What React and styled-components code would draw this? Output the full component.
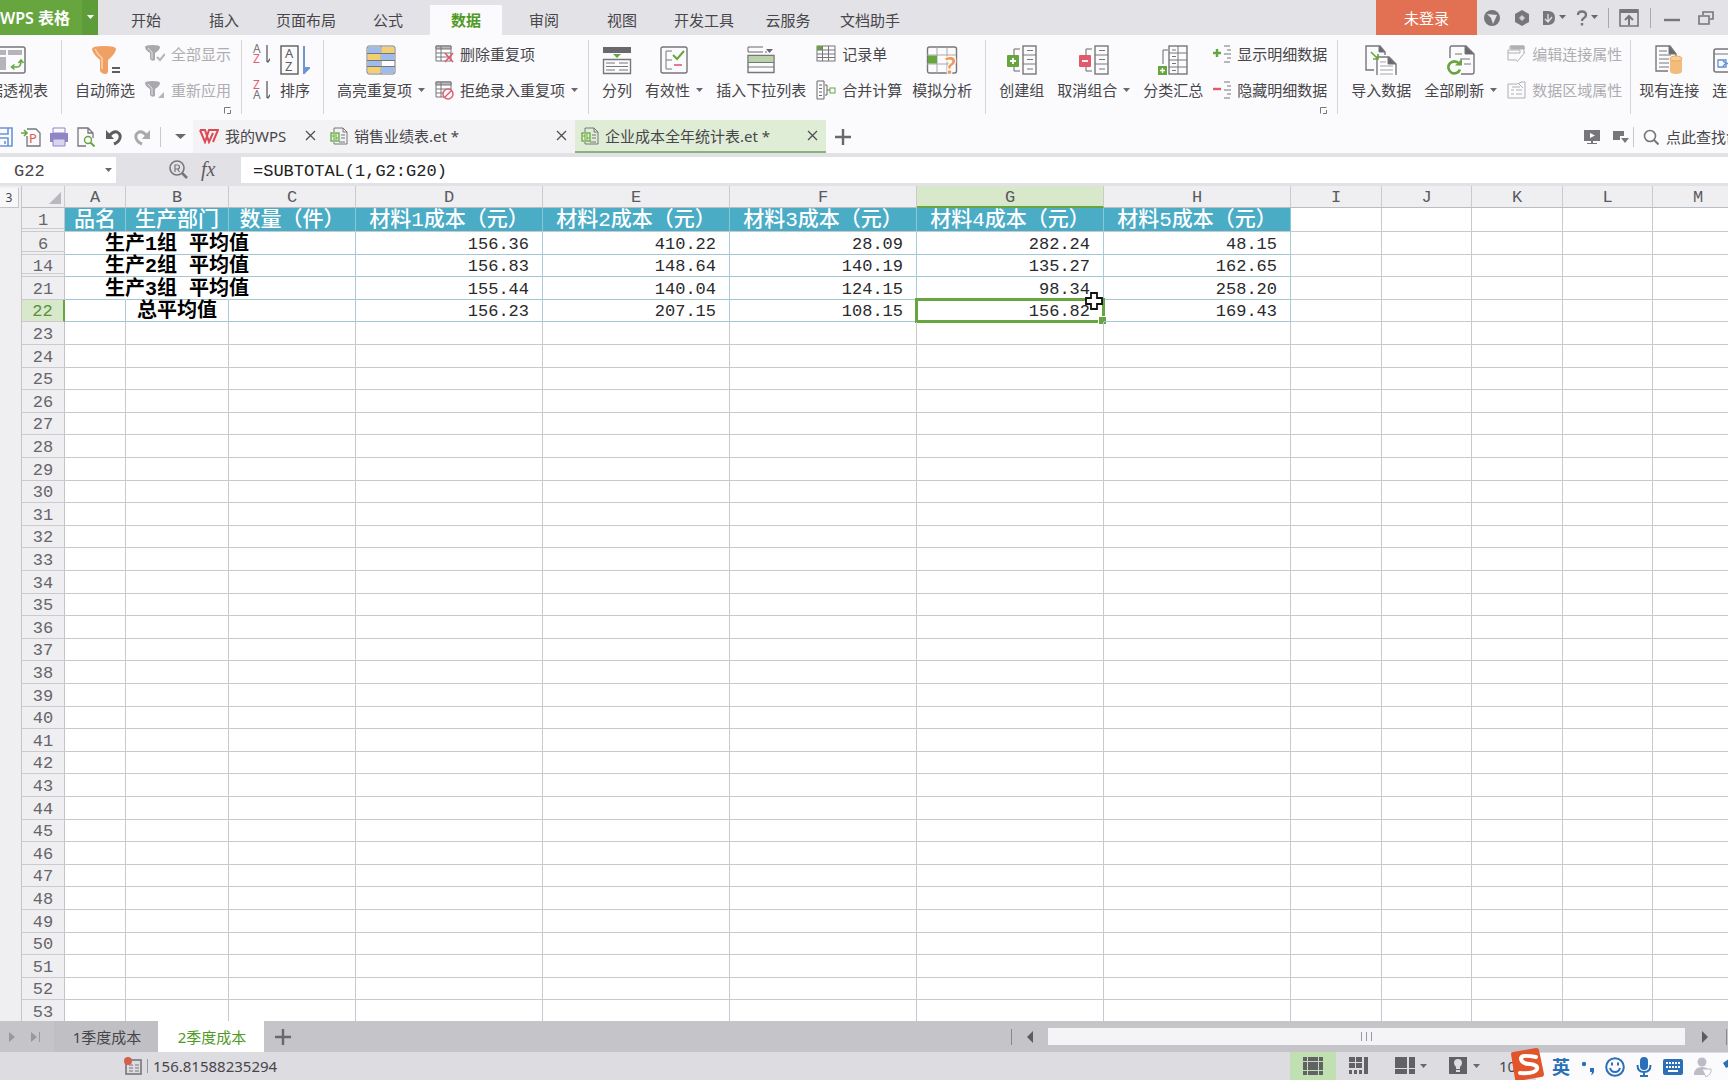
import React, { useState } from "react";
import styled, { createGlobalStyle, css } from "styled-components";

const GREEN = "#67a63f";
const GREY = "#77767a";
const UI_FONT = `"Noto Sans", "Noto Sans CJK SC", sans-serif`;
const CELL_FONT = `"Liberation Mono", "Noto Sans CJK SC", monospace`;

const GlobalStyle = createGlobalStyle`
  * { box-sizing: border-box; }
  body {
    margin: 0;
    overflow: hidden;
    background: #fbfafc;
    color: #47464a;
    font: 15px/20px ${UI_FONT};
  }
  button, input {
    margin: 0;
    padding: 0;
    border: 0;
    background: none;
    color: inherit;
    font: inherit;
  }
  button { white-space: nowrap; }
  input:focus { outline: none; }
  svg { display: block; flex: none; }
  svg text { font-family: ${UI_FONT}; }
`;

const Window = styled.div`
  display: flex;
  flex-direction: column;
  height: 100vh;
  overflow: hidden;
`;

/* ---------- title bar ---------- */

const TitleBar = styled.header`
  display: flex;
  flex: none;
  height: 35px;
  background: #e3e2e7;
`;

const AppButton = styled.button`
  display: flex;
  align-items: center;
  justify-content: flex-end;
  width: 98px;
  background: ${GREEN};
  color: #fff;
  font-size: 16px;
  font-weight: 600;
`;

const AppCaret = styled.span`
  display: flex;
  align-items: center;
  justify-content: center;
  align-self: stretch;
  width: 17px;
  margin-left: 12px;
  background: #5d9c38;
`;

const Menu = styled.nav`
  display: flex;
  align-items: flex-end;
  gap: 6px;
  padding-left: 12px;
`;

const MenuTab = styled.button`
  width: ${p => p.$width || 72}px;
  height: 30px;
  background: ${p => (p.$active ? "#fbfafc" : "transparent")};
  color: ${p => (p.$active ? "#4f9a26" : "#47464a")};
  font-weight: ${p => (p.$active ? 600 : 400)};
`;

const TitleTools = styled.div`
  display: flex;
  align-items: center;
  margin-left: auto;
  padding-right: 3px;
`;

const LoginButton = styled.button`
  width: 101px;
  height: 35px;
  background: #e27052;
  color: #fff;
`;

const TitleTool = styled.button`
  display: flex;
  align-items: center;
  justify-content: center;
  gap: 3px;
  width: ${p => p.$width || 30}px;
  height: 30px;
`;

const Divider = styled.span`
  flex: none;
  width: 1px;
  height: ${p => p.$height || 20}px;
  margin: 0 ${p => p.$gap || 0}px;
  background: ${p => p.$color || "#c9c8cc"};
`;

/* ---------- ribbon ---------- */

const Ribbon = styled.section`
  display: flex;
  flex: none;
  height: 85px;
  margin-left: -27px;
  padding-top: 5px;
  overflow: hidden;
`;

const Group = styled.div`
  position: relative;
  display: flex;
  flex: none;
  gap: 10px;
  height: 74px;
  padding-left: ${p => p.$left ?? 13}px;
  padding-right: ${p => p.$right ?? 13}px;
  border-right: 1px solid #d6d5d9;
`;

const BigButton = styled.button`
  display: flex;
  flex-direction: column;
  align-items: center;
  gap: 5px;
  height: 65px;
  padding-top: 5px;

  & + & {
    margin-left: 3px;
  }
`;

const Label = styled.span`
  display: flex;
  align-items: center;
  gap: 6px;
`;

const Stack = styled.div`
  display: flex;
  flex-direction: column;
  gap: 16px;
  padding-top: 4px;
`;

const SmallButton = styled.button`
  display: flex;
  align-items: center;
  gap: 6px;
  height: 20px;
  color: ${p => (p.disabled ? "#aeadb1" : "inherit")};
`;

const Launcher = styled.button`
  position: absolute;
  right: 10px;
  bottom: 0;
`;

/* ---------- quick access + document tabs ---------- */

const QuickBar = styled.div`
  display: flex;
  flex: none;
  align-items: center;
  height: 33px;
`;

const QuickTools = styled.div`
  display: flex;
  align-items: center;
  justify-content: space-between;
  width: 160px;
  margin-left: -7px;
  padding-right: 1px;
`;

const IconButton = styled.button`
  display: flex;
  align-items: center;
  justify-content: center;
  width: ${p => p.$width || 20}px;
  height: ${p => p.$height || 24}px;
`;

const DocTab = styled.div`
  display: flex;
  align-items: center;
  gap: 6px;
  width: ${p => p.$width}px;
  height: 33px;
  padding: 0 8px 0 6px;
  background: ${p => (p.$active ? "#e0edd6" : "#f3f2f5")};
  border-bottom: 2px solid ${p => (p.$active ? "#8bb27a" : "#f3f2f5")};
`;

const DocName = styled.button`
  flex: 1;
  text-align: left;
`;

const QuickRight = styled.div`
  display: flex;
  align-items: center;
  width: 144px;
  margin-left: auto;
  overflow: hidden;
  white-space: nowrap;
`;

const FindCommand = styled.button`
  display: flex;
  align-items: center;
  gap: 7px;
`;

/* ---------- formula bar ---------- */

const FormulaBar = styled.div`
  display: flex;
  flex: none;
  height: 33px;
  padding: 4px 0 3px;
  background: #e2e1e6;
  font-family: ${CELL_FONT};
  font-size: 17px;
`;

const NameBox = styled.div`
  display: flex;
  align-items: center;
  width: 116px;
  padding: 0 4px 0 14px;
  background: #fff;

  input {
    flex: 1;
    min-width: 0;
    padding-top: 3px;
  }
`;

const FormulaTools = styled.div`
  display: flex;
  align-items: center;
  justify-content: flex-end;
  gap: 12px;
  width: 125px;
  padding-right: 21px;
`;

const FormulaInput = styled.input`
  flex: 1;
  min-width: 0;
  padding-top: 3px;
  padding-left: 12px;
  background: #fff;
  color: #222;
`;

/* ---------- sheet ---------- */

const SheetArea = styled.main`
  display: flex;
  flex: 1;
  min-height: 0;
  overflow: hidden;
  background: #fff;
`;

const Outline = styled.aside`
  flex: none;
  width: 22px;
  background: #efeef1;
  border-right: 1px solid #c5c4c9;
`;

const OutlineLevel = styled.button`
  width: 19px;
  height: 20px;
  border: 1px solid #c5c4c9;
  border-width: 0 1px 1px 0;
  background: #f7f6f8;
  font-size: 12px;
`;

const Sheet = styled.table`
  flex: none;
  width: 1721px;
  table-layout: fixed;
  border-collapse: separate;
  border-spacing: 0;
  font-family: ${CELL_FONT};
  font-size: 17px;
  line-height: 18px;
  white-space: nowrap;

  th, td {
    padding: 3px 0 0;
    font-weight: 400;
  }
`;

const ColHead = styled.th`
  height: 22px;
  background: ${p => (p.$active ? "#d7e8cb" : "#efeef1")};
  border-right: 1px solid #cbcacf;
  border-bottom: ${p => (p.$active ? `2px solid ${GREEN}` : "1px solid #b9bcc2")};
  color: #5a595d;
  line-height: 16px;
`;

const Corner = styled(ColHead)`
  svg {
    margin: 0 3px 0 auto;
  }
`;

const SheetRow = styled.tr`
  height: 23px;

  &:nth-child(5n),
  &:nth-child(5n + 3) {
    height: 22px;
  }

  &:first-child {
    height: 24px;
  }
`;

const RowHead = styled.th`
  background: ${p => (p.$active ? "#d7e8cb" : "#efeef1")};
  color: ${p => (p.$active ? "#5a8f3c" : "#66656a")};
  border-right: ${p => (p.$active ? `2px solid ${GREEN}` : "1px solid #c5c4c9")};
  border-bottom: 1px solid #cbcacf;
  box-shadow: ${p => (p.$folded ? "inset 0 -2px #efeef1, inset 0 -3px #cbcacf" : "none")};
`;

const Cell = styled.td`
  position: relative;
  border-right: 1px solid ${p => (p.$open ? "#fff" : p.$data ? "#a9cbd6" : "#c9c8cd")};
  border-bottom: 1px solid ${p => (p.$data ? "#a3c6d2" : "#c9c8cd")};
  color: #2a2a2d;

  ${p =>
    p.$head &&
    css`
      background: #4bacc6;
      border-right-color: #86c8da;
      color: #fff;
      font-size: 21px;
      font-weight: 500 !important;
      text-align: center;
    `}
  ${p => p.$number && "padding-right: 13px !important; text-align: right;"}
`;

const Title = styled.span`
  display: flex;
  justify-content: center;
  height: 18px;
  color: #000;
  font-size: 20px;
  font-weight: 700;
`;

const Selection = styled.span`
  position: absolute;
  inset: -2px -2px -2px -2px;
  border: 3px solid ${GREEN};

  &::after {
    content: "";
    position: absolute;
    right: -4px;
    bottom: -4px;
    width: 7px;
    height: 7px;
    border: 1px solid #fff;
    border-width: 1px 0 0 1px;
    background: ${GREEN};
  }
`;

const Pointer = styled.svg`
  position: absolute;
  z-index: 2;
  right: -1px;
  top: -9px;
`;

/* ---------- bottom bars ---------- */

const SheetBar = styled.footer`
  display: flex;
  flex: none;
  height: 31px;
  background: #c5c4c8;
`;

const SheetTabs = styled.div`
  display: flex;
  align-items: center;
  width: 1011px;
`;

const SheetNav = styled.div`
  display: flex;
  align-items: center;
  gap: 14px;
  width: 54px;
  padding-left: 8px;
`;

const SheetTab = styled.button`
  width: ${p => (p.$active ? 106 : 104)}px;
  height: 31px;
  padding-left: 2px;
  background: ${p => (p.$active ? "#fff" : "#c0bfc4")};
  color: ${p => (p.$active ? "#4f9a26" : "#47464a")};
`;

const ScrollRow = styled.div`
  display: flex;
  flex: 1;
  align-items: center;
`;

const Thumb = styled.div`
  display: flex;
  flex: 1;
  align-items: center;
  justify-content: center;
  gap: 4px;
  height: 17px;
  background: #f4f3f6;
`;

const StatusBar = styled.footer`
  display: flex;
  flex: none;
  align-items: center;
  height: 28px;
  padding-left: 124px;
  background: #dddce1;
`;

const StatusViews = styled.div`
  display: flex;
  align-items: center;
  width: 438px;
  height: 28px;
  margin-left: auto;
`;

const ViewButton = styled.button`
  display: flex;
  align-items: center;
  justify-content: center;
  gap: 5px;
  width: ${p => p.$width || 46}px;
  height: 28px;
  background: ${p => (p.$active ? "#c1e0b1" : "transparent")};
`;

const InputBar = styled.div`
  position: fixed;
  right: 0;
  bottom: 0;
  display: flex;
  align-items: center;
  gap: 11px;
  width: 192px;
  height: 27px;
  padding-left: 16px;
  overflow: hidden;
  background: #fbfbfd;
  color: #2a6fb8;
  font-size: 18px;
  font-weight: 700;
`;

const InputLogo = styled.svg`
  position: fixed;
  right: 183px;
  bottom: 0;
`;

/* ---------- icons ---------- */

const Icon = ({ w = 20, h = 20, children, ...rest }) => (
  <svg
    width={w}
    height={h}
    viewBox={`0 0 ${w} ${h}`}
    fill="none"
    stroke={GREY}
    aria-hidden="true"
    {...rest}
  >
    {children}
  </svg>
);

const Caret = ({ color = "#69686c", w = 7 }) => (
  <Icon w={w} h={5} fill={color} stroke="none">
    <path d={`M0 0H${w}L${w / 2} ${w > 8 ? 5 : 4}z`} />
  </Icon>
);

const Close = () => (
  <Icon w={11} h={11} stroke="#4f4e52" strokeWidth="1.3">
    <path d="M1 1l9 9M10 1l-9 9" />
  </Icon>
);

const Plus = () => (
  <Icon w={16} h={16} strokeWidth="2.4" stroke="#69686c">
    <path d="M8 0v16M0 8h16" />
  </Icon>
);

const PivotIcon = () => (
  <Icon w={30} h={30}>
    <rect x="1" y="2" width="28" height="26" rx="2" strokeWidth="1.5" />
    <path d="M4 5h6v5H4zM12 5h14v5H12zM4 12h6v13H4z" fill="#b5b4b8" stroke="none" />
    <path d="M16 22h5q4 0 4-6M22.5 18l2.5-3 2.5 3M18.5 19.5L15.5 22l3 2.5" stroke={GREEN} strokeWidth="1.5" />
  </Icon>
);

const FilterIcon = () => (
  <Icon w={30} h={30} stroke="none">
    <path d="M2 4q0-3 12-3t12 3q0 4-8 11v11q0 3-3 3-5-1-5-4V15Q2 8 2 4z" fill="#f0a063" />
    <path d="M5 4q3 6 7 9v11" stroke="#fbd3b0" strokeWidth="1.5" />
    <path d="M22 22h8v2h-8zM22 26h8v2h-8z" fill="#5d5c60" />
  </Icon>
);

const SmallFilter = ({ again }) => (
  <Icon stroke="none">
    <path d="M0 3q0-2 7.5-2T15 3q0 3-5 6v7q-3 2-5-1V9Q0 6 0 3z" fill="#a9a8ac" />
    <path d="M3 4q2 3 4 4v7" stroke="#e4e3e6" />
    {again ? (
      <path d="M19 12v6h-6z" fill="#b5b4b8" />
    ) : (
      <path d="M12 13l3 3 5-6" stroke="#b5b4b8" strokeWidth="2" />
    )}
  </Icon>
);

const AzIcon = ({ reverse }) => (
  <Icon w={18} stroke="none">
    <text x="1" y="9" fontSize="12" fill={reverse ? "#df5d70" : "#77767a"}>{reverse ? "Z" : "A"}</text>
    <text x="1" y="19" fontSize="12" fill={reverse ? "#77767a" : "#df5d70"}>{reverse ? "A" : "Z"}</text>
    <path d="M15 1v17M15.5 18.5l3-4" stroke="#5d5c60" strokeWidth="1.3" />
  </Icon>
);

const SortIcon = () => (
  <Icon w={30} h={30}>
    <rect x="1" y="1" width="17" height="28" stroke="#5d5c60" strokeWidth="1.4" />
    <text x="5" y="13" fontSize="13" fill="#5d5c60" stroke="none">A</text>
    <text x="5" y="26" fontSize="13" fill="#5d5c60" stroke="none">Z</text>
    <path d="M24 1v28M24 28l5-5h-5" stroke="#6d95d6" strokeWidth="2" fill="#6d95d6" />
  </Icon>
);

const HighlightIcon = () => (
  <Icon w={30} h={30}>
    <rect x="1" y="1" width="28" height="28" rx="2" fill="#fff" />
    <path d="M2 2h12v6H2zM16 9h12v6H16zM2 16h12v5H2zM16 22h12v6H16z" fill="#9dbbec" stroke="none" />
    <path d="M16 2h12v6H16zM2 9h12v6H2zM2 22h12v6H2z" fill="#f4cf72" stroke="none" />
    <path d="M1 8.5h28M1 15.5h28M1 21.5h28M15 1v28" />
  </Icon>
);

const DupIcon = ({ ban }) => (
  <Icon w={19}>
    <path d="M1 2h15v15H1z" fill="#fff" />
    <path d="M1 2h15v3H1z" fill="#b8b7bb" />
    <path d="M1 9h15M1 13h15M6 2v15" />
    {ban ? (
      <g stroke="#df5d70" strokeWidth="1.5">
        <circle cx="13" cy="14" r="5" fill="#fbfafc" />
        <path d="M9.5 17.5l7-7" />
      </g>
    ) : (
      <path d="M10 9l8 9M18 9l-8 9" stroke="#df5d70" strokeWidth="1.8" />
    )}
  </Icon>
);

const SplitIcon = () => (
  <Icon w={30} h={30}>
    <path d="M1 2h28v6H1z" fill="#69686c" stroke="none" />
    <path d="M11 9h8l-4 4z" fill={GREEN} stroke="none" />
    <path d="M1.5 14.5h27v14h-27z" strokeWidth="1.4" />
    <path d="M4 18h9M17 18h9M4 21.5h22M4 25h9M17 25h9" />
  </Icon>
);

const ValidIcon = () => (
  <Icon w={30} h={30}>
    <rect x="2" y="2" width="26" height="26" rx="2" strokeWidth="1.4" />
    <path d="M13 6H7v18h6M7 15h6" />
    <path d="M14 10l4 4 7-8" stroke={GREEN} strokeWidth="2" />
    <path d="M15 20h8" stroke="#df5d70" strokeWidth="1.6" />
  </Icon>
);

const DropListIcon = () => (
  <Icon w={30} h={30}>
    <path d="M2 7V2h15M2 7h15M19 7h2" stroke="#69686c" />
    <path d="M20 4h7l-3.5 4z" fill="#69686c" stroke="none" />
    <path d="M2 10.5h26v17H2z" strokeWidth="1.4" />
    <path d="M3 11h24v6H3z" fill="#b9d3a8" stroke="none" />
    <path d="M2 17.5h26M2 22h26" />
  </Icon>
);

const FormIcon = () => (
  <Icon>
    <rect x="1" y="2" width="18" height="15" />
    <path d="M1 2h5v4H1z" fill={GREEN} stroke="none" />
    <path d="M1 6h18M1 10h18M1 13.5h18M6.5 2v15M12.5 2v15" />
  </Icon>
);

const MergeIcon = () => (
  <Icon>
    <path d="M1 1h7v18H1zM3 5h3M3 8.5h3M3 12h3M3 15.5h3M9 5h2v10H9M11 10h3" stroke="#69686c" />
    <rect x="14" y="8" width="5" height="5" stroke={GREEN} />
  </Icon>
);

const WhatIfIcon = () => (
  <Icon w={32} h={30}>
    <rect x="1.5" y="2" width="29" height="26" rx="2" strokeWidth="1.4" />
    <path d="M11 2v26M21 2v26M1 10h29M1 19h29" stroke="#aaa9ad" />
    <path d="M2 10.5h9v8H2z" fill={GREEN} stroke="none" />
    <text x="19" y="29" fontSize="23" fontWeight="600" fill="#ee9a58" stroke="#fff" strokeWidth="2" paintOrder="stroke">?</text>
  </Icon>
);

const GroupIcon = ({ remove }) => (
  <Icon w={30} h={30}>
    <path d="M13 4H7v22h6" stroke="#69686c" />
    <rect x="16" y="1" width="13" height="28" strokeWidth="1.4" />
    <path d="M16 10h13M16 19h13M20 5.5h6M20 14.5h6M20 24h6" />
    <rect x="0" y="10" width="12" height="12" rx="1" fill={remove ? "#e3596b" : GREEN} stroke="none" />
    <path d={remove ? "M3 16h6" : "M3 16h6M6 13v6"} stroke="#fff" strokeWidth="1.8" />
  </Icon>
);

const SubtotalIcon = () => (
  <Icon w={30} h={30}>
    <path d="M10 5H5v14" stroke="#69686c" />
    <rect x="11" y="1" width="18" height="28" strokeWidth="1.4" />
    <path d="M11 8h18M11 15h18M11 22h18M20 1v28M14 5h4M14 11.5h4M14 18.5h4M14 25.5h4" />
    <rect x="0" y="21" width="9" height="9" fill={GREEN} stroke="none" />
    <path d="M2 25.5h5M4.5 23v5" stroke="#fff" strokeWidth="1.4" />
  </Icon>
);

const DetailIcon = ({ hide }) => (
  <Icon w={18}>
    <path d={hide ? "M0 9h8" : "M0 9h8M4 5v8"} stroke={hide ? "#e3596b" : GREEN} strokeWidth="2.4" />
    <path d="M11 2h6M14 6h4M11 10h7M14 14h4M11 18h6" />
  </Icon>
);

const ImportIcon = () => (
  <Icon w={32} h={30}>
    <path d="M9 25H1V1h14l5 6v3" strokeWidth="1.4" />
    <path d="M14 1v6h6z" fill="#69686c" />
    <path d="M12 31V12h12l7 7v12" fill="#fff" strokeWidth="1.4" />
    <path d="M23 12v7h8z" fill="#69686c" />
    <path d="M15 17h6M15 21h13M15 25h13M15 29h13" stroke="#a3a2a6" />
    <path d="M6 7l7 7M13 9v5H8" stroke={GREEN} strokeWidth="1.6" />
  </Icon>
);

const RefreshIcon = () => (
  <Icon w={30} h={30}>
    <path d="M4 13V3q0-2 2-2h14l8 8v18q0 2-2 2H15" strokeWidth="1.4" />
    <path d="M19 1v8h9z" fill="#69686c" />
    <path d="M9 9h7M14 14h10M18 19h7" />
    <path d="M13 18.5a6 6 0 1 0 1 6" stroke={GREEN} strokeWidth="2.6" />
    <path d="M9 20.500h7v-7z" fill={GREEN} stroke="none" />
  </Icon>
);

const LinkEditIcon = () => (
  <Icon w={19} stroke="#b0afb3">
    <path d="M3 5V2h14v7M1 6h12v3H1zM1 9v7h9M18 8l-8 10" />
    <path d="M4 2h13v3H4z" fill="#b0afb3" />
  </Icon>
);

const LinkAreaIcon = () => (
  <Icon w={19} stroke="#b0afb3">
    <path d="M1 4h9l5-2h3v16H1zM4 10h3M9 10h6M4 14h3M9 14h6M5 7h8M12 4l4 4" />
  </Icon>
);

const ConnectionIcon = () => (
  <Icon w={30} h={30}>
    <path d="M14 26H2V1h14l6 8v3" strokeWidth="1.4" />
    <path d="M15 1v8h7z" fill="#69686c" />
    <path d="M5 6h8M5 10h12M5 14h10M5 18h10M5 22h10" />
    <path d="M16 14v12q0 3 6 3t6-3V14z" fill="#f2bd7c" stroke="none" />
    <ellipse cx="22" cy="13.5" rx="6" ry="2.5" fill="#f7cf9c" stroke="#eda957" />
  </Icon>
);

const LinkPropIcon = () => (
  <Icon w={58} h={30}>
    <rect x="1" y="4" width="32" height="23" rx="2" strokeWidth="1.6" />
    <path d="M1 9h32" />
    <path d="M5 15h8v7H5zM13 18.5h8M10 16l3 2.5-3 2.5" stroke="#5f8fd8" strokeWidth="1.3" />
  </Icon>
);

const SheetDoc = () => (
  <Icon w={18} h={18}>
    <path d="M4 5V1h9l4 4v12H4v-2M13 1v4h4M11 8h4M11 11h4M9 15h6" />
    <rect x="1" y="6" width="8" height="8" fill="#e6f1de" stroke={GREEN} strokeWidth="1.3" />
    <path d="M7 8H3v2h4v2H3" stroke={GREEN} />
  </Icon>
);

const bigTools = [
  { Ico: GroupIcon, label: "创建组" },
  { Ico: props => <GroupIcon remove {...props} />, label: "取消组合", caret: true },
  { Ico: SubtotalIcon, label: "分类汇总" }
];

const Big = ({ Ico, label, caret }) => (
  <BigButton>
    <Ico />
    <Label>
      {label}
      {caret && <Caret />}
    </Label>
  </BigButton>
);

const Small = ({ icon, label, caret, disabled }) => (
  <SmallButton disabled={disabled}>
    {icon}
    {label}
    {caret && <Caret />}
  </SmallButton>
);

const LauncherMark = () => (
  <Launcher aria-label="more">
    <Icon w={7} h={7}>
      <path d="M6.5.5h-6v6M6.5 3v3.5H3" />
    </Icon>
  </Launcher>
);

/* ---------- data ---------- */

const menus = [
  ["开始"], ["插入"], ["页面布局", 80], ["公式"], ["数据"],
  ["审阅"], ["视图"], ["开发工具", 80], ["云服务", 76], ["文档助手", 76]
];

const columns = [
  ["A", 61], ["B", 103], ["C", 127], ["D", 187], ["E", 187], ["F", 187], ["G", 187],
  ["H", 187], ["I", 91], ["J", 90], ["K", 91], ["L", 90], ["M", 91]
];

const headings = [
  "品名", "生产部门", "数量（件）", "材料1成本（元）", "材料2成本（元）",
  "材料3成本（元）", "材料4成本（元）", "材料5成本（元）"
];

const summary = [
  { row: 6, title: "生产1组 平均值", values: ["156.36", "410.22", "28.09", "282.24", "48.15"] },
  { row: 14, title: "生产2组 平均值", values: ["156.83", "148.64", "140.19", "135.27", "162.65"] },
  { row: 21, title: "生产3组 平均值", values: ["155.44", "140.04", "124.15", "98.34", "258.20"] },
  { row: 22, title: "总平均值", values: ["156.23", "207.15", "108.15", "156.82", "169.43"] }
];

const emptyRows = Array.from({ length: 31 }, (_, i) => 23 + i);

const SheetTable = () => (
  <Sheet>
    <colgroup>
      <col style={{ width: 43 }} />
      {columns.map(([name, width]) => (
        <col key={name} style={{ width }} />
      ))}
    </colgroup>
    <thead>
      <tr>
        <Corner>
          <Icon w={12} h={12} fill="#b9b8bc" stroke="none">
            <path d="M12 0v12H0z" />
          </Icon>
        </Corner>
        {columns.map(([name]) => (
          <ColHead key={name} $active={name === "G"}>{name}</ColHead>
        ))}
      </tr>
    </thead>
    <tbody>
      <SheetRow>
        <RowHead $folded>1</RowHead>
        {columns.map(([name], i) => (
          <Cell key={name} $head={i < 8}>{headings[i]}</Cell>
        ))}
      </SheetRow>
      {summary.map(({ row, title, values }) => (
        <SheetRow key={row}>
          <RowHead $active={row === 22} $folded={row < 21}>{row}</RowHead>
          {columns.map(([name], i) => {
            const selected = row === 22 && name === "G";
            return (
              <Cell
                key={name}
                $data={i < 8}
                $open={row !== 22 && i < 2}
                $number={i > 2 && i < 8}
              >
                {i === 1 && <Title>{title}</Title>}
                {values[i - 3]}
                {selected && <Selection />}
                {selected && (
                  <Pointer width="20" height="20" viewBox="0 0 20 20">
                    <path
                      d="M7 2h6v5h5v6h-5v5H7v-5H2V7h5z"
                      fill="#fff"
                      stroke="#111"
                      strokeWidth="1.8"
                    />
                  </Pointer>
                )}
              </Cell>
            );
          })}
        </SheetRow>
      ))}
      {emptyRows.map(row => (
        <SheetRow key={row}>
          <RowHead>{row}</RowHead>
          {columns.map(([name]) => (
            <Cell key={name} />
          ))}
        </SheetRow>
      ))}
    </tbody>
  </Sheet>
);

const App = () => {
  const [menu, setMenu] = useState("数据");
  const [formula, setFormula] = useState("=SUBTOTAL(1,G2:G20)");
  const [cellName, setCellName] = useState("G22");

  return (
    <Window>
      <GlobalStyle />
      <TitleBar>
        <AppButton>
          WPS 表格
          <AppCaret>
            <Caret color="#fff" />
          </AppCaret>
        </AppButton>
        <Menu>
          {menus.map(([name, width]) => (
            <MenuTab key={name} $width={width} $active={name === menu} onClick={() => setMenu(name)}>
              {name}
            </MenuTab>
          ))}
        </Menu>
        <TitleTools>
          <LoginButton>未登录</LoginButton>
          <TitleTool aria-label="skin">
            <Icon w={16} h={16} stroke="none">
              <circle cx="8" cy="8" r="8" fill={GREY} />
              <path d="M3 4l10 1-4 9-2-6z" fill="#e3e2e7" />
            </Icon>
          </TitleTool>
          <TitleTool aria-label="cloud">
            <Icon w={16} h={16} stroke="none">
              <path d="M8 0l7 4v8l-7 4-7-4V4z" fill={GREY} />
              <path d="M8 5l3 3-3 3-3-3z" fill="#d0cfd4" />
            </Icon>
          </TitleTool>
          <TitleTool $width={34} aria-label="documents">
            <Icon w={14} h={16} stroke="none">
              <path d="M1 1h5q7 0 7 7t-7 7H1z" fill={GREY} />
              <path d="M6 4v7M3 9l3 3 4-5" stroke="#e3e2e7" strokeWidth="1.3" />
            </Icon>
            <Caret />
          </TitleTool>
          <TitleTool $width={32} aria-label="help">
            <Icon w={12} h={16} strokeWidth="2.4">
              <path d="M2 5q0-3.5 4-3.5T10 5q0 2-2 3t-2 3" />
              <path d="M6 13v2.5" />
            </Icon>
            <Caret />
          </TitleTool>
          <Divider $gap={5} $color="#aaa9ad" />
          <TitleTool aria-label="collapse ribbon">
            <Icon w={20} h={20} strokeWidth="1.6">
              <path d="M1 2h18v16H1z" />
              <path d="M1 1h18v4H1z" fill={GREY} stroke="none" />
              <path d="M10 17V8M6 12l4-4 4 4" strokeWidth="2" />
            </Icon>
          </TitleTool>
          <Divider $gap={6} $color="#aaa9ad" />
          <TitleTool aria-label="minimize">
            <Icon w={16} h={16} strokeWidth="2.4">
              <path d="M0 10h16" />
            </Icon>
          </TitleTool>
          <TitleTool $width={38} aria-label="restore">
            <Icon w={16} h={14} strokeWidth="1.6">
              <path d="M5 4V1h10v7h-3M1 5h10v8H1z" />
            </Icon>
          </TitleTool>
        </TitleTools>
      </TitleBar>

      <Ribbon>
        <Group $left={0}>
          <Big Ico={PivotIcon} label="数据透视表" />
        </Group>
        <Group $right={10}>
          <Big Ico={FilterIcon} label="自动筛选" />
          <Stack>
            <Small icon={<SmallFilter />} label="全部显示" disabled />
            <Small icon={<SmallFilter again />} label="重新应用" disabled />
          </Stack>
          <LauncherMark />
        </Group>
        <Group $left={10}>
          <Stack>
            <SmallButton aria-label="ascending"><AzIcon /></SmallButton>
            <SmallButton aria-label="descending"><AzIcon reverse /></SmallButton>
          </Stack>
          <Big Ico={SortIcon} label="排序" />
        </Group>
        <Group $right={10}>
          <Big Ico={HighlightIcon} label="高亮重复项" caret />
          <Stack>
            <Small icon={<DupIcon />} label="删除重复项" />
            <Small icon={<DupIcon ban />} label="拒绝录入重复项" caret />
          </Stack>
        </Group>
        <Group>
          <Big Ico={SplitIcon} label="分列" />
          <Big Ico={ValidIcon} label="有效性" caret />
          <Big Ico={DropListIcon} label="插入下拉列表" />
          <Stack>
            <Small icon={<FormIcon />} label="记录单" />
            <Small icon={<MergeIcon />} label="合并计算" />
          </Stack>
          <Big Ico={WhatIfIcon} label="模拟分析" />
        </Group>
        <Group $right={10}>
          {bigTools.map(tool => (
            <Big key={tool.label} {...tool} />
          ))}
          <Stack>
            <Small icon={<DetailIcon />} label="显示明细数据" />
            <Small icon={<DetailIcon hide />} label="隐藏明细数据" />
          </Stack>
          <LauncherMark />
        </Group>
        <Group $right={8}>
          <Big Ico={ImportIcon} label="导入数据" />
          <Big Ico={RefreshIcon} label="全部刷新" caret />
          <Stack>
            <Small icon={<LinkEditIcon />} label="编辑连接属性" disabled />
            <Small icon={<LinkAreaIcon />} label="数据区域属性" disabled />
          </Stack>
        </Group>
        <Group $left={8}>
          <Big Ico={ConnectionIcon} label="现有连接" />
          <Big Ico={LinkPropIcon} label="连接属性" />
        </Group>
      </Ribbon>

      <QuickBar>
        <QuickTools>
          <IconButton aria-label="save">
            <Icon stroke="#6b94d6" strokeWidth="1.6">
              <path d="M1 1h18v18H3l-2-2zM5 1v6h10V1M5 19v-8h10v8M12 14v3" />
            </Icon>
          </IconButton>
          <IconButton aria-label="export pdf">
            <Icon>
              <path d="M6 2h9l4 4v13H6V9" strokeWidth="1.3" />
              <text x="8" y="16" fontSize="13" fill="#e0574d" stroke="none">P</text>
              <path d="M0 6h6M3 3l3 3-3 3" stroke={GREEN} strokeWidth="1.6" />
            </Icon>
          </IconButton>
          <IconButton aria-label="print">
            <Icon stroke="none" fill="#8f86c6">
              <path d="M4 1h12v5H4z" stroke="#8f86c6" fill="#fbfafc" />
              <path d="M1 6h18v9H1z" />
              <path d="M4 12h12v7H4z" stroke="#8f86c6" fill="#d9d5ee" />
            </Icon>
          </IconButton>
          <IconButton aria-label="preview">
            <Icon>
              <path d="M10 19H2V1h10l5 5v5M12 1v5h5" strokeWidth="1.3" />
              <circle cx="12" cy="13" r="3.5" stroke={GREEN} strokeWidth="1.4" />
              <path d="M14.5 15.5l4 4" stroke={GREEN} strokeWidth="2" />
            </Icon>
          </IconButton>
          <IconButton aria-label="undo">
            <Icon w={18} h={18} stroke="#5d5c60" strokeWidth="3">
              <path d="M4 8q4-5 8-4 4 2 3 6-1 4-6 6" />
              <path d="M1 2v9h8z" fill="#5d5c60" stroke="none" />
            </Icon>
          </IconButton>
          <IconButton aria-label="redo">
            <Icon w={18} h={18} stroke="#a9a8ac" strokeWidth="3">
              <path d="M14 8q-4-5-8-4-4 2-3 6 1 4 6 6" />
              <path d="M17 2v9H9z" fill="#a9a8ac" stroke="none" />
            </Icon>
          </IconButton>
        </QuickTools>
        <Divider $gap={7} />
        <IconButton $width={25} aria-label="customize">
          <Caret w={11} />
        </IconButton>
        <DocTab $width={131}>
          <Icon w={20} h={16} stroke="#dd4a55" strokeWidth="2">
            <path d="M1 2h5l4 12 4-9M1 2l5 12L10 2h9l-5 12" />
          </Icon>
          <DocName>我的WPS</DocName>
          <IconButton $width={11} aria-label="close"><Close /></IconButton>
        </DocTab>
        <DocTab $width={251}>
          <SheetDoc />
          <DocName>销售业绩表.et *</DocName>
          <IconButton $width={11} aria-label="close"><Close /></IconButton>
        </DocTab>
        <DocTab $width={251} $active>
          <SheetDoc />
          <DocName>企业成本全年统计表.et *</DocName>
          <IconButton $width={11} aria-label="close"><Close /></IconButton>
        </DocTab>
        <IconButton $width={34} aria-label="new document"><Plus /></IconButton>
        <QuickRight>
          <IconButton $width={18} aria-label="play">
            <Icon w={16} h={16} stroke="none" fill={GREY}>
              <path d="M0 1h16v11H0zM7 12h2v2H7zM3 14h10v1H3z" />
              <path d="M6 4l5 2.5L6 9z" fill="#fff" />
            </Icon>
          </IconButton>
          <Divider $gap={6} $color="transparent" />
          <IconButton aria-label="switch">
            <Icon w={16} h={16} stroke="none" fill={GREY}>
              <path d="M0 2h11v5H7v4H0zM8 9h8l-4 5z" />
            </Icon>
          </IconButton>
          <Divider $gap={4} />
          <Divider $gap={2} $color="transparent" />
          <FindCommand>
            <Icon w={16} h={16} strokeWidth="1.6">
              <circle cx="7" cy="7" r="5.5" />
              <path d="M11 11l4.5 4.5" strokeWidth="2" />
            </Icon>
            点此查找命令
          </FindCommand>
        </QuickRight>
      </QuickBar>

      <FormulaBar>
        <NameBox>
          <input aria-label="cell name" value={cellName} onChange={e => setCellName(e.target.value)} />
          <IconButton $width={7} aria-label="names"><Caret /></IconButton>
        </NameBox>
        <FormulaTools>
          <IconButton aria-label="search formula">
            <Icon strokeWidth="1.6">
              <circle cx="9" cy="8" r="7" />
              <path d="M14 13l5 5" strokeWidth="2.6" />
              <path d="M7 12V5h2.5q2 0 2 2t-2 2H7M9.5 9l2 3" strokeWidth="1.2" />
            </Icon>
          </IconButton>
          <IconButton aria-label="function">
            <Icon w={22} h={22} stroke="none">
              <text x="2" y="17" fontSize="20" fontStyle="italic" fill="#5d5c60" style={{ fontFamily: "Liberation Serif" }}>fx</text>
            </Icon>
          </IconButton>
        </FormulaTools>
        <FormulaInput aria-label="formula" value={formula} onChange={e => setFormula(e.target.value)} />
      </FormulaBar>

      <SheetArea>
        <Outline>
          <OutlineLevel>3</OutlineLevel>
        </Outline>
        <SheetTable />
      </SheetArea>

      <SheetBar>
        <SheetTabs>
          <SheetNav>
            <Icon w={8} h={12} fill="#99989c" stroke="none"><path d="M1 1l6 5-6 5z" /></Icon>
            <Icon w={12} h={12} fill="#99989c" stroke="none"><path d="M1 1l6 5-6 5zM9 1h1v10H9z" /></Icon>
          </SheetNav>
          <SheetTab>1季度成本</SheetTab>
          <SheetTab $active>2季度成本</SheetTab>
          <IconButton $width={38} aria-label="new sheet"><Plus /></IconButton>
        </SheetTabs>
        <ScrollRow>
          <Divider $height={16} $color="#88878b" />
          <IconButton $width={36} aria-label="scroll left">
            <Icon w={8} h={12} fill="#5d5c60" stroke="none"><path d="M7 0v12L1 6z" /></Icon>
          </IconButton>
          <Thumb>
            <Divider $height={9} $color="#99989c" />
            <Divider $height={9} $color="#99989c" />
            <Divider $height={9} $color="#99989c" />
          </Thumb>
          <IconButton $width={40} aria-label="scroll right">
            <Icon w={8} h={12} fill="#5d5c60" stroke="none"><path d="M1 0v12l6-6z" /></Icon>
          </IconButton>
          <Divider $height={16} $color="#88878b" $gap={1} />
        </ScrollRow>
      </SheetBar>

      <StatusBar>
        <Icon w={18} h={18}>
          <rect x="2" y="3" width="15" height="14" strokeWidth="1.6" />
          <path d="M5 8h4M5 11h4M5 14h4M11 8h4M11 11h4M11 14h4" />
          <circle cx="4" cy="4" r="4" fill="#d4604c" stroke="none" />
        </Icon>
        <Divider $gap={5} $height={14} $color="#99989c" />
        156.81588235294
        <StatusViews>
          <ViewButton $active aria-label="normal view">
            <Icon stroke="none" fill="#626165">
              <path d="M0 1h4v4H0zM5 1h10v4H5zM16 1h4v4h-4zM0 6h4v8H0zM5 6h10v8H5zM16 6h4v8h-4zM0 15h4v4H0zM5 15h10v4H5zM16 15h4v4h-4z" />
            </Icon>
          </ViewButton>
          <ViewButton aria-label="page view">
            <Icon stroke="none" fill="#626165">
              <path d="M0 1h6v5H0zM7 1h6v5H7zM0 7h6v5H0zM7 7h6v5H7zM15 1h4v17h-4zM0 14h3v4H0zM5 14h3v4H5zM10 14h3v4h-3z" />
            </Icon>
          </ViewButton>
          <ViewButton $width={58} aria-label="freeze">
            <Icon stroke="none" fill="#626165">
              <path d="M0 1h12v11H0zM14 1h6v11h-6zM0 13h12v5H0zM14 13h6v5h-6z" />
            </Icon>
            <Caret />
          </ViewButton>
          <ViewButton $width={48} aria-label="reading light">
            <Icon stroke="none" fill="#626165">
              <path d="M1 1h18v17H1z" />
              <path d="M10 3q-4 0-4 4 0 2 2 4v2h4v-2q2-2 2-4 0-4-4-4zM8 14h4v2H8z" fill="#dddce1" />
            </Icon>
            <Caret />
          </ViewButton>
          <ViewButton $width={60}>100%</ViewButton>
        </StatusViews>
      </StatusBar>

      <InputBar>
        英
        <Icon w={13} h={18} stroke="none" fill="#2a6fb8">
          <circle cx="3" cy="6" r="2.2" />
          <path d="M9 10h4v3q0 3-3 4 1-2 1-3H9z" />
        </Icon>
        <Icon w={20} h={20} stroke="#2a6fb8" strokeWidth="2">
          <circle cx="10" cy="10" r="8.8" />
          <path d="M5 11q1 4 5 4t5-4M7 5.5v3M13 5.5v3" />
        </Icon>
        <Icon w={16} h={20} stroke="#2a6fb8" strokeWidth="2">
          <rect x="5" y="1" width="6" height="11" rx="3" fill="#2a6fb8" />
          <path d="M1.5 8q0 7 6.5 7t6.5-7M8 15v4M4 19h8" />
        </Icon>
        <Icon w={20} h={16} stroke="none" fill="#2a6fb8">
          <rect width="20" height="16" rx="2" />
          <path d="M3 4h14M3 8h14" stroke="#fff" strokeWidth="2" strokeDasharray="2 1" />
          <path d="M5 12h10" stroke="#fff" strokeWidth="2" />
        </Icon>
        <Icon w={18} h={20} stroke="none" fill="#bdbcc6">
          <circle cx="8" cy="5" r="4.5" />
          <path d="M0 18q0-8 8-8t8 8z" />
          <path d="M8 12h9q1 5-5 8z" fill="#fbfbfd" stroke="#bdbcc6" />
        </Icon>
        <Icon w={22} h={18} stroke="none" fill="#2a6fb8">
          <path d="M0 5l7-5q4 3 8 0l7 5-3 5-2-1v9H5V9L3 10z" />
        </Icon>
      </InputBar>
      <InputLogo width="37" height="32" viewBox="0 0 37 32" aria-hidden="true">
        <path d="M3 6Q3 4 5 4L28 0q3 0 3 2l5 24q0 3-3 3L10 33q-3 0-3-2z" fill="#e2552b" />
        <path
          d="M28 9Q12 6 13 11t9 5q8 1 7 5-2 5-17 4"
          fill="none"
          stroke="#fff"
          strokeWidth="4"
          strokeLinecap="round"
        />
      </InputLogo>
    </Window>
  );
};

export default App;
